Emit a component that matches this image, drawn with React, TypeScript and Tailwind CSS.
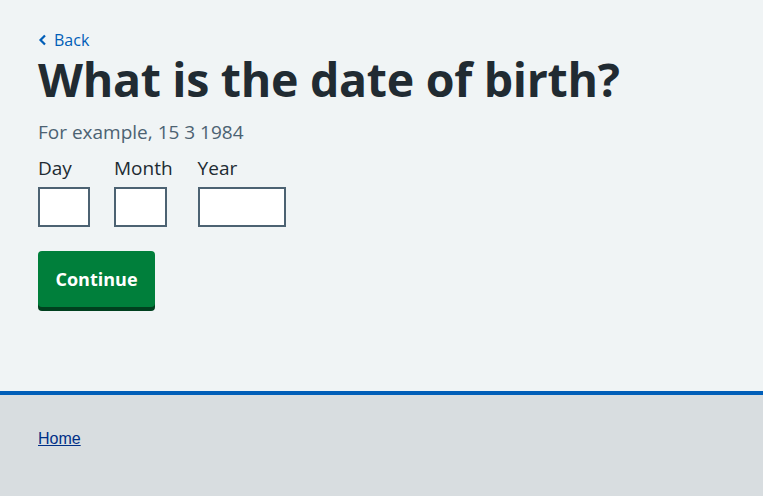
import React from 'react';

const App: React.FC = () => {
  return (
    <div className="min-h-[496px] flex flex-col bg-[#f0f4f5] font-['Open_Sans',sans-serif] text-[#212b32]">
      <main className="h-[391px] px-[38px] pt-[30px]">
        <a href="#" className="flex items-center gap-[7px] text-[16px] leading-[20px] text-[#005eb8]">
          <svg className="w-[9px] h-[12px]" viewBox="0 0 9 12" fill="none" stroke="currentColor" strokeWidth={2.2}>
            <path d="M7 1.5L2.5 6L7 10.5" />
          </svg>
          Back
        </a>
        <h1 className="mt-[5px] text-[46.5px] leading-[48px] font-bold tracking-[-0.3px]">What is the date of birth?</h1>
        <div className="mt-[17px] text-[19px] leading-[24px] text-[#4c6272]">For example, 15 3 1984</div>
        <div className="mt-[12px] flex gap-[24px]">
          <div className="flex flex-col">
            <label className="text-[19px] leading-[24px]">Day</label>
            <input className="mt-[7px] w-[52px] h-[40px] border-2 border-[#4c6272] bg-white" />
          </div>
          <div className="flex flex-col">
            <label className="text-[19px] leading-[24px]">Month</label>
            <input className="mt-[7px] w-[53px] h-[40px] border-2 border-[#4c6272] bg-white" />
          </div>
          <div className="flex flex-col ml-[1px]">
            <label className="text-[19px] leading-[24px]">Year</label>
            <input className="mt-[7px] w-[88px] h-[40px] border-2 border-[#4c6272] bg-white" />
          </div>
        </div>
        <button className="mt-[24px] w-[117px] h-[56px] rounded-[4px] bg-[#007f3b] text-white font-bold text-[18px] shadow-[0_4px_0_#00401e]">
          Continue
        </button>
      </main>
      <footer className="flex-1 border-t-4 border-[#005eb8] bg-[#d8dde0] px-[38px] pt-[31px]">
        <a href="#" className="font-['Liberation_Sans',sans-serif] text-[16px] leading-[20px] text-[#003087] underline">
          Home
        </a>
      </footer>
    </div>
  );
};

export default App;
